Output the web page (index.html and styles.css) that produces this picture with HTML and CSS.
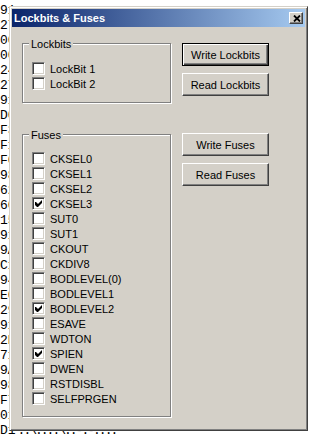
FILE: index.html
```html
<!DOCTYPE html>
<html lang="en">
<head>
    <meta charset="UTF-8">
    <meta name="viewport" content="width=device-width, initial-scale=1.0">
    <title>Lockbits &amp; Fuses</title>
    <link rel="stylesheet" href="styles.css">
</head>
<body>
    <!-- hex dump column in the window behind the dialog -->
<pre class="hexdump">91
27
00
00
24
27
91
D0
F3
F1
F0
98
62
60
15
91
9A
C1
94
E0
29
91
2E
71
9A
98
F7
01
D1<span class="ascii">..\....\..-.-....</span></pre>

    <div class="dialog">
        <div class="titlebar">
            <span class="title">Lockbits &amp; Fuses</span>
            <button class="close-btn" type="button">
                <svg width="8" height="7" viewBox="0 0 8 7"><path d="M1 0.5 L7 6.5 M7 0.5 L1 6.5" stroke="#000" stroke-width="1.8"/></svg>
            </button>
        </div>

        <div class="client">
            <div class="groups">
                <div class="group lockbits">
                    <span class="group-label">Lockbits</span>
                    <div class="check"><span class="box"></span>LockBit 1</div>
                    <div class="check"><span class="box"></span>LockBit 2</div>
                </div>

                <div class="group fuses">
                    <span class="group-label">Fuses</span>
                    <div class="check"><span class="box"></span>CKSEL0</div>
                    <div class="check"><span class="box"></span>CKSEL1</div>
                    <div class="check"><span class="box"></span>CKSEL2</div>
                    <div class="check"><span class="box"><svg width="7" height="7" viewBox="0 0 7 7"><polygon points="0,2 1,2 3,4 7,0 7,3 3,7 2,7 0,5"/></svg></span>CKSEL3</div>
                    <div class="check"><span class="box"></span>SUT0</div>
                    <div class="check"><span class="box"></span>SUT1</div>
                    <div class="check"><span class="box"></span>CKOUT</div>
                    <div class="check"><span class="box"></span>CKDIV8</div>
                    <div class="check"><span class="box"></span>BODLEVEL(0)</div>
                    <div class="check"><span class="box"></span>BODLEVEL1</div>
                    <div class="check"><span class="box"><svg width="7" height="7" viewBox="0 0 7 7"><polygon points="0,2 1,2 3,4 7,0 7,3 3,7 2,7 0,5"/></svg></span>BODLEVEL2</div>
                    <div class="check"><span class="box"></span>ESAVE</div>
                    <div class="check"><span class="box"></span>WDTON</div>
                    <div class="check"><span class="box"><svg width="7" height="7" viewBox="0 0 7 7"><polygon points="0,2 1,2 3,4 7,0 7,3 3,7 2,7 0,5"/></svg></span>SPIEN</div>
                    <div class="check"><span class="box"></span>DWEN</div>
                    <div class="check"><span class="box"></span>RSTDISBL</div>
                    <div class="check"><span class="box"></span>SELFPRGEN</div>
                </div>
            </div>

            <div class="actions">
                <button class="btn default" type="button">Write Lockbits</button>
                <button class="btn" type="button">Read Lockbits</button>
                <button class="btn fuse-btn" type="button">Write Fuses</button>
                <button class="btn" type="button">Read Fuses</button>
            </div>
        </div>
    </div>
</body>
</html>
```

FILE: styles.css
```css
* {
    margin: 0;
    padding: 0;
    box-sizing: border-box;
}

body {
    position: relative;
    height: 100vh;
    overflow: hidden;
    background-color: #fff;
    font-family: "Liberation Sans", Arial, sans-serif;
    font-size: 11px;
    color: #000;
}

.hexdump {
    font-family: "Liberation Mono", "Courier New", monospace;
    font-size: 13px;
    line-height: 15px;
    padding-top: 3px;
}

.hexdump .ascii {
    letter-spacing: -2px;
    margin-left: 2px;
}

/* dialog window */
.dialog {
    position: absolute;
    left: 9px;
    top: 6px;
    width: 299px;
    height: 425px;
    background-color: #d4d0c8;
    border: 1px solid;
    border-color: #d4d0c8 #404040 #404040 #d4d0c8;
    box-shadow: inset 1px 1px 0 #fff, inset -1px -1px 0 #808080;
    padding: 2px;
}

.titlebar {
    display: flex;
    align-items: center;
    height: 18px;
    padding: 0 2px 0 2px;
    background: linear-gradient(to right, #0a246a, #a6caf0);
}

.title {
    flex: 1;
    color: #fff;
    font-weight: bold;
    font-size: 11px;
    line-height: 18px;
}

.close-btn {
    display: flex;
    align-items: center;
    justify-content: center;
    width: 14px;
    height: 12px;
    padding-left: 1px;
    background-color: #d4d0c8;
    border: 1px solid;
    border-color: #fff #404040 #404040 #fff;
    box-shadow: inset -1px -1px 0 #808080;
}

.client {
    display: flex;
    padding: 16px 0 0 10px;
}

.groups {
    width: 149px;
}

.group {
    position: relative;
    border: 1px solid #808080;
    box-shadow: 1px 1px 0 #fff, inset 1px 1px 0 #fff;
}

.lockbits {
    padding: 17px 0 11px 9px;
}

.fuses {
    margin-top: 31px;
    padding: 16px 0 10px 9px;
}

.group-label {
    position: absolute;
    top: -6px;
    left: 6px;
    padding: 0 2px;
    line-height: 13px;
    background-color: #d4d0c8;
}

.check {
    display: flex;
    align-items: center;
    gap: 5px;
    height: 15px;
}

.box {
    display: flex;
    width: 13px;
    height: 13px;
    padding: 2px;
    background-color: #fff;
    border: 1px solid;
    border-color: #808080 #fff #fff #808080;
    box-shadow: inset 1px 1px 0 #404040, inset -1px -1px 0 #d4d0c8;
}

.actions {
    display: flex;
    flex-direction: column;
    margin-left: 11px;
}

.btn {
    width: 87px;
    height: 23px;
    font-family: "Liberation Sans", Arial, sans-serif;
    font-size: 11px;
    color: #000;
    background-color: #d4d0c8;
    border: 1px solid;
    border-color: #fff #404040 #404040 #fff;
    box-shadow: inset -1px -1px 0 #808080;
}

.btn + .btn {
    margin-top: 7px;
}

.btn.default {
    border-color: #000;
    box-shadow: inset 1px 1px 0 #fff, inset -1px -1px 0 #404040, inset -2px -2px 0 #808080;
}

.btn.fuse-btn {
    margin-top: 37px;
}
```
